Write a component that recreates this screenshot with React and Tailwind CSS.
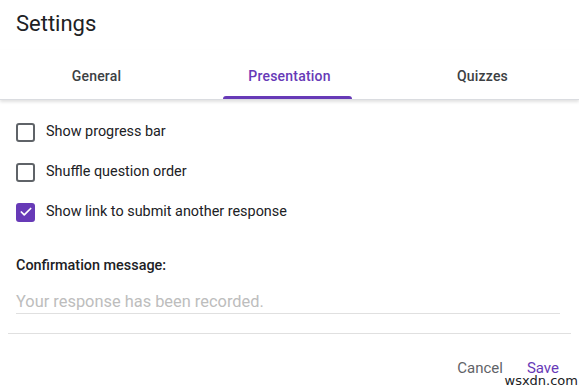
import { Check } from "lucide-react";

const options = [
  { label: "Show progress bar", checked: false },
  { label: "Shuffle question order", checked: false },
  { label: "Show link to submit another response", checked: true },
];

const tabs = ["General", "Presentation", "Quizzes"];

function Checkbox({ checked }) {
  if (checked) {
    return (
      <div className="w-[19px] h-[19px] rounded-[3px] bg-[#673ab7] flex items-center justify-center">
        <Check className="w-[14px] h-[14px] text-white" strokeWidth={3} />
      </div>
    );
  }
  return <div className="w-[19px] h-[19px] rounded-[3px] border-2 border-[#5f6368]" />;
}

export default function App() {
  return (
    <div className="w-[579px] h-[389px] bg-white relative overflow-hidden font-['Roboto',sans-serif] text-[#202124]">
      <div className="px-4 pt-[10px] h-[50px]">
        <h1 className="text-[22px] leading-[28px] text-[#202124]">Settings</h1>
      </div>

      <div className="grid grid-cols-3 h-[50px] border-b border-[#dadce0] shadow-[0_2px_3px_rgba(0,0,0,0.12)]">
        {tabs.map((tab, i) => (
          <div key={tab} className="relative flex items-center justify-center pt-[4px]">
            <span
              className={
                "text-[14px] font-medium tracking-[0.2px] " +
                (i === 1 ? "text-[#673ab7]" : "text-[#3c4043]")
              }
            >
              {tab}
            </span>
            {i === 1 && (
              <div className="absolute bottom-0 left-[30px] right-[34px] h-[3px] rounded-t-[3px] bg-[#673ab7]" />
            )}
          </div>
        ))}
      </div>

      <div className="px-4 pt-[12px] flex flex-col">
        {options.map((opt) => (
          <div key={opt.label} className="h-[40px] flex items-center gap-[11px]">
            <Checkbox checked={opt.checked} />
            <span className="text-[14.4px] text-[#202124]">{opt.label}</span>
          </div>
        ))}

        <div className="mt-[23px] text-[14.4px] font-medium text-[#202124]">Confirmation message:</div>

        <div className="mt-[13px] mr-[3px] border-b border-[#e0e0e0] h-[24px] leading-[24px]">
          <span className="text-[16.4px] text-[#bdbdbd]">Your response has been recorded.</span>
        </div>
      </div>

      <div className="mx-2 mt-[19px] border-t border-[#e0e0e0]" />

      <div className="flex justify-end items-center gap-[24px] pr-[20px] pt-[25px]">
        <span className="text-[15px] leading-[18px] text-[#5f6368]">Cancel</span>
        <span className="text-[15px] leading-[18px] text-[#673ab7]">Save</span>
      </div>

      <div className="absolute right-0 bottom-[3px] bg-white px-[1px] text-[13px] leading-[11px] font-['DejaVu_Sans',sans-serif] text-[#202124]">
        wsxdn.com
      </div>
    </div>
  );
}
